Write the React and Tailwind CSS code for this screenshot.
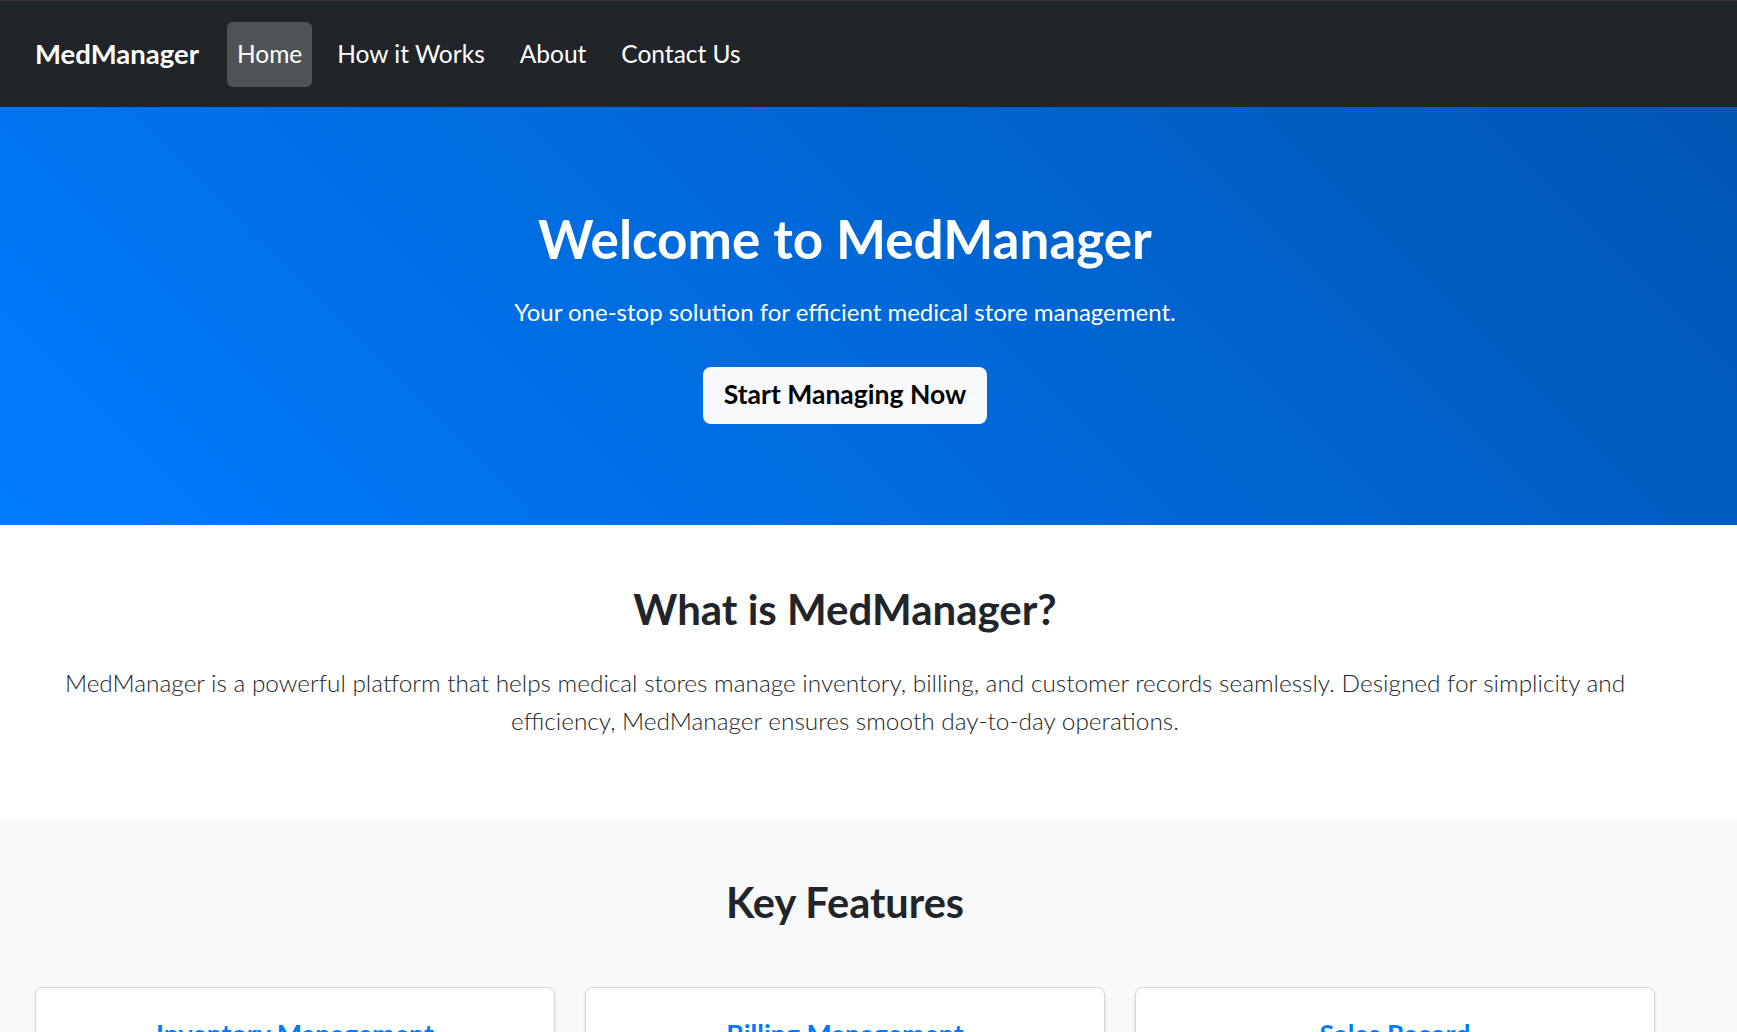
import React from 'react';

const features = [
  {
    title: 'Inventory Management',
    text: 'Track stock levels, expiry dates and reorder points for every medicine in your store.',
  },
  {
    title: 'Billing Management',
    text: 'Generate accurate bills in seconds and keep every invoice organised and searchable.',
  },
  {
    title: 'Sales Record',
    text: 'Review daily, weekly and monthly sales to understand how your store is performing.',
  },
];

const NavBar = () => {
  const links = ['Home', 'How it Works', 'About', 'Contact Us'];
  return (
    <nav className="h-[107px] bg-[#212529] border-t border-[#3d3539] flex items-center pl-[35px]">
      <a href="#" className="text-white font-bold text-[27.5px] leading-none mr-[28px]">
        MedManager
      </a>
      <div className="flex items-center gap-[15px]">
        {links.map((link, i) => (
          <a
            key={link}
            href="#"
            className={
              i === 0
                ? 'h-[65px] px-[10px] flex items-center rounded-[6px] bg-[#4f5356] text-white text-[24.5px]'
                : 'h-[65px] px-[10px] flex items-center rounded-[6px] text-white text-[24.5px]'
            }
          >
            {link}
          </a>
        ))}
      </div>
    </nav>
  );
};

const Hero = () => (
  <section className="h-[418px] bg-[linear-gradient(45deg,#007bff,#0056b3)] text-white">
    <div className="w-[1690px] flex flex-col items-center pt-[100px]">
      <h1 className="text-[53px] font-bold leading-[1.2]">Welcome to MedManager</h1>
      <p className="text-[24px] leading-[1.5] mt-[23px]">
        Your one-stop solution for efficient medical store management.
      </p>
      <button className="mt-[37px] h-[57px] px-[21px] rounded-[8px] bg-[#f8f9fa] text-black text-[26.5px] font-bold">
        Start Managing Now
      </button>
    </div>
  </section>
);

const About = () => (
  <section className="h-[294px] bg-white">
    <div className="w-[1690px] px-[30px] pt-[59px] text-center text-[#212529]">
      <h2 className="text-[42px] font-bold leading-[1.2]">What is MedManager?</h2>
      <p className="mt-[30px] text-[24.4px] font-light leading-[38px]">
        MedManager is a powerful platform that helps medical stores manage inventory, billing, and customer records seamlessly. Designed for simplicity and
        <br />
        efficiency, MedManager ensures smooth day-to-day operations.
      </p>
    </div>
  </section>
);

const Features = () => (
  <section className="bg-[#f8f9fa] pb-[60px]">
    <div className="w-[1690px] px-[35px] pt-[59px]">
      <h2 className="text-center text-[41.5px] font-bold leading-[1.2] text-[#212529]">Key Features</h2>
      <div className="mt-[59px] grid grid-cols-3 gap-[30px]">
        {features.map((f) => (
          <div
            key={f.title}
            className="bg-white border border-[#d6d8db] rounded-[8px] shadow-sm pt-[30px] pb-[30px] px-[24px] text-center"
          >
            <h3 className="text-[26.8px] font-bold leading-[1.2] text-[#007bff]">{f.title}</h3>
            <p className="mt-[16px] text-[18px] text-[#6c757d]">{f.text}</p>
          </div>
        ))}
      </div>
    </div>
  </section>
);

export default function App() {
  return (
    <div className="min-h-screen bg-white font-['Segoe_UI',Lato,'Liberation_Sans',sans-serif]">
      <NavBar />
      <Hero />
      <About />
      <Features />
    </div>
  );
}
